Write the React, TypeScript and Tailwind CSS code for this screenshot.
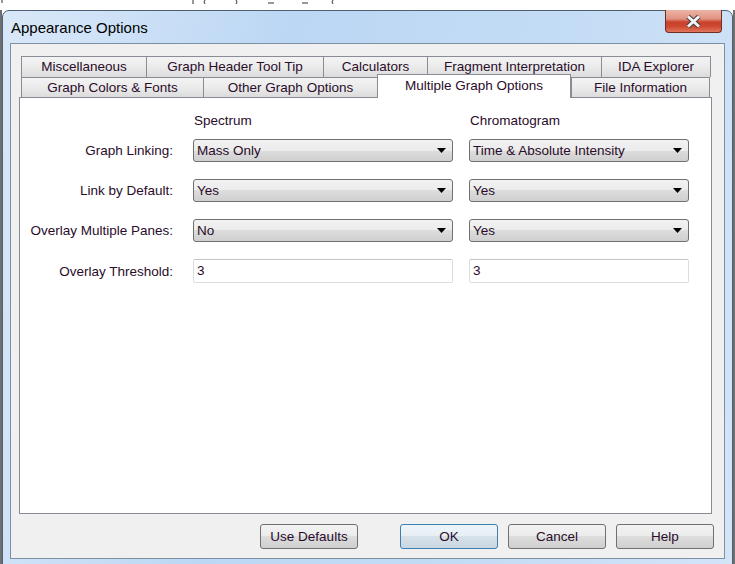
import React from 'react'

const txt = 'text-[#2a0c2a]'

function Tab({ label, w, last }: { label: string; w: number; last?: boolean }) {
  return (
    <div
      style={{ width: w }}
      className={`h-full flex items-center justify-center border-l border-t border-[#898c95] bg-gradient-to-b from-[#f3f3f3] via-[#ebebeb] to-[#dcdcdc] ${last ? 'border-r' : ''}`}
    >
      <span className={txt}>{label}</span>
    </div>
  )
}

function Combo({ value, w }: { value: string; w: number }) {
  return (
    <div
      style={{ width: w }}
      className="h-[23px] rounded-[3px] border border-[#707070] bg-[linear-gradient(to_bottom,#f2f2f2_0%,#ebebeb_50%,#dddddd_50%,#cfcfcf_100%)] flex items-center pl-[3px] pr-[5px]"
    >
      <span className={`flex-1 ${txt}`}>{value}</span>
      <svg width="10" height="6" viewBox="0 0 10 6">
        <path d="M0 0 H9 L4.5 5 Z" fill="#000" />
      </svg>
    </div>
  )
}

function TextBox({ value, w }: { value: string; w: number }) {
  return (
    <div
      style={{ width: w }}
      className="h-[24px] rounded-[2px] border border-[#dcdde2] border-t-[#c3c5cb] bg-white flex items-center pl-[3px]"
    >
      <span className={txt}>{value}</span>
    </div>
  )
}

function Row({ label, children }: { label: string; children: React.ReactNode }) {
  return (
    <div className="flex items-center">
      <div className={`w-[153px] text-right pt-[1px] ${txt}`}>{label}</div>
      <div className="ml-[20px] flex items-center gap-[16px]">{children}</div>
    </div>
  )
}

function Btn({ label, primary }: { label: string; primary?: boolean }) {
  return (
    <button
      className={`w-[98px] h-[25px] rounded-[3px] border flex items-center justify-center ${txt} ${
        primary
          ? 'border-[#3c7fb1] bg-[linear-gradient(to_bottom,#eef5fa_0%,#e6eef4_50%,#d6e1ea_50%,#cbd7e1_100%)]'
          : 'border-[#707070] bg-[linear-gradient(to_bottom,#f2f2f2_0%,#ebebeb_50%,#dddddd_50%,#cfcfcf_100%)]'
      }`}
    >
      {label}
    </button>
  )
}

export default function App() {
  return (
    <div className="w-[735px] h-[564px] overflow-hidden bg-white font-['Liberation_Sans',Arial,sans-serif] text-[13.5px] leading-[16px]">
      {/* bits of the window behind */}
      <svg width="735" height="10" className="block">
        <path d="M2 0 V3 M193 0 V4 M205 0 Q203 2 205 4 M236 0 Q238 2 236 4 M268 3 H274 M302 3 H308 M333 0 Q331 2 333 4" stroke="#333" strokeWidth="1" fill="none" />
      </svg>

      <div className="flex">
        <div className="w-[2px] h-[554px] bg-[#6f6f72]" />

        <div className="w-[731px] h-[560px] rounded-t-[7px] border border-[#4d6074] bg-[linear-gradient(100deg,#d9e8f8_0%,#bcd7f4_35%,#c4dcf5_70%,#d3e4f7_100%)] px-[7px] shrink-0">
          {/* title bar */}
          <div className="h-[32px] flex items-start justify-between">
            <div className="pt-[8px] pl-[1px] text-[15px] leading-[18px] text-black">Appearance Options</div>
            <div className="-mt-[1px] mr-[3px] w-[57px] h-[23px] rounded-b-[4px] border border-t-0 border-[#6e2e24] bg-[linear-gradient(to_bottom,#ecb3a6_0%,#e29382_40%,#c9412b_55%,#cf4a32_75%,#e0765c_100%)] flex items-center justify-center">
              <svg width="17" height="15" viewBox="0 0 17 15">
                <path d="M3 2.5 L14 12.5 M14 2.5 L3 12.5" stroke="#3e3e46" strokeWidth="5" />
                <path d="M3 2.5 L14 12.5 M14 2.5 L3 12.5" stroke="#f4f4f4" strokeWidth="3" />
              </svg>
            </div>
          </div>

          {/* client area */}
          <div className="h-[516px] border border-[#7d8fa3] bg-[#f0f0f0] pt-[12px]">
            <div className="ml-[8px] w-[693px]">
              <div className="pl-[2px]">
                <div className="flex h-[21px]">
                  <Tab label="Miscellaneous" w={125} />
                  <Tab label="Graph Header Tool Tip" w={177} />
                  <Tab label="Calculators" w={104} />
                  <Tab label="Fragment Interpretation" w={174} />
                  <Tab label="IDA Explorer" w={110} last />
                </div>
                <div className="flex h-[20px]">
                  <Tab label="Graph Colors & Fonts" w={182} />
                  <Tab label="Other Graph Options" w={174} />
                  <div className="relative z-10 w-[194px] h-[24px] -mt-[3px] border border-b-0 border-[#898c95] bg-white flex justify-center pt-[3px]">
                    <span className={txt}>Multiple Graph Options</span>
                  </div>
                  <Tab label="File Information" w={139} last />
                </div>
              </div>

              <div className="h-[417px] border border-[#898c95] bg-white pt-[15px]">
                <div className="flex">
                  <div className="w-[153px]" />
                  <div className={`ml-[21px] w-[276px] ${txt}`}>Spectrum</div>
                  <div className={txt}>Chromatogram</div>
                </div>
                <div className="mt-[10px] flex flex-col gap-[17px]">
                  <Row label="Graph Linking:">
                    <Combo value="Mass Only" w={260} />
                    <Combo value="Time & Absolute Intensity" w={220} />
                  </Row>
                  <Row label="Link by Default:">
                    <Combo value="Yes" w={260} />
                    <Combo value="Yes" w={220} />
                  </Row>
                  <Row label="Overlay Multiple Panes:">
                    <Combo value="No" w={260} />
                    <Combo value="Yes" w={220} />
                  </Row>
                  <Row label="Overlay Threshold:">
                    <TextBox value="3" w={260} />
                    <TextBox value="3" w={220} />
                  </Row>
                </div>
              </div>
            </div>

            <div className="mt-[10px] flex justify-end pr-[10px]">
              <div className="mr-[42px]">
                <Btn label="Use Defaults" />
              </div>
              <div className="flex gap-[10px]">
                <Btn label="OK" primary />
                <Btn label="Cancel" />
                <Btn label="Help" />
              </div>
            </div>
          </div>
        </div>

        <div className="w-[2px] h-[554px] bg-[#6f6f72]" />
      </div>
    </div>
  )
}
